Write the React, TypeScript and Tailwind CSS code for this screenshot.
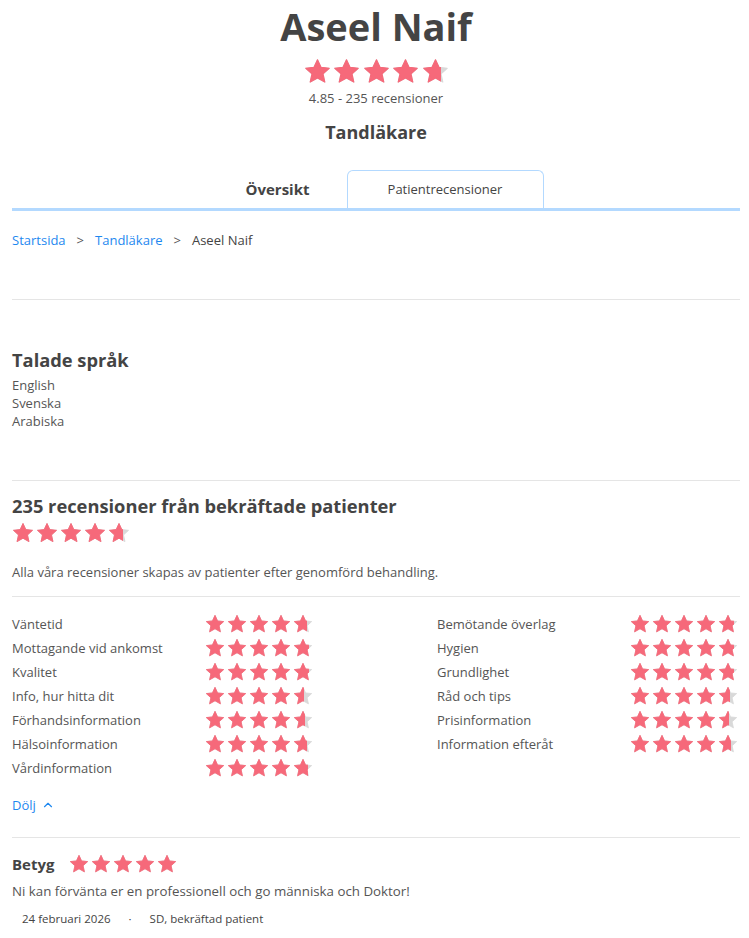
import React from 'react';
import { ChevronUp } from 'lucide-react';

const STAR = '12,1.6 15.1,8.3 22.4,9.1 16.9,14.1 18.5,21.4 12,17.7 5.5,21.4 7.1,14.1 1.6,9.1 8.9,8.3';

const Star: React.FC<{ size: number; fill: number }> = ({ size, fill }) => (
  <span className="relative inline-block shrink-0" style={{ width: size, height: size }}>
    <svg viewBox="0 0 24 24" width={size} height={size} className="block">
      <polygon points={STAR} fill="#d9d9d9" stroke="#d9d9d9" strokeWidth="1" strokeLinejoin="round" />
    </svg>
    <span className="absolute left-0 top-0 h-full overflow-hidden" style={{ width: size * fill }}>
      <svg viewBox="0 0 24 24" width={size} height={size} className="block">
        <polygon points={STAR} fill="#f6697a" stroke="#f6697a" strokeWidth="1" strokeLinejoin="round" />
      </svg>
    </span>
  </span>
);

const Stars: React.FC<{ size: number; last: number; gap: string }> = ({ size, last, gap }) => (
  <div className={`flex ${gap}`}>
    {[1, 1, 1, 1, last].map((f, i) => (
      <Star key={i} size={size} fill={f} />
    ))}
  </div>
);

// fill of the last star per row
const LEFT: [string, number][] = [
  ['Väntetid', 0.7],
  ['Mottagande vid ankomst', 0.8],
  ['Kvalitet', 0.78],
  ['Info, hur hitta dit', 0.55],
  ['Förhandsinformation', 0.58],
  ['Hälsoinformation', 0.68],
  ['Vårdinformation', 0.74],
];

const RIGHT: [string, number][] = [
  ['Bemötande överlag', 0.8],
  ['Hygien', 0.8],
  ['Grundlighet', 0.8],
  ['Råd och tips', 0.6],
  ['Prisinformation', 0.55],
  ['Information efteråt', 0.65],
];

const RatingRow: React.FC<{ label: string; fill: number }> = ({ label, fill }) => (
  <div className="flex h-[24px] items-center justify-between">
    <span className="text-[13px] leading-[24px] text-[#555]">{label}</span>
    <Stars size={20} last={fill} gap="gap-[2px]" />
  </div>
);

const Divider: React.FC<{ mt: string }> = ({ mt }) => <div className={`${mt} h-px bg-[#e5e5e5]`} />;

export default function App() {
  return (
    <div className="min-h-[938px] bg-white px-3 pr-[9px] font-['Open_Sans',sans-serif] text-[#444]">
      <header className="text-center">
        <h1 className="pt-[4px] text-[38px] font-bold leading-[44px] text-[#444]">Aseel Naif</h1>
        <div className="mt-[10px] flex justify-center">
          <Stars size={27} last={0.72} gap="gap-[2.5px]" />
        </div>
        <p className="mt-[4px] text-[13px] leading-[18px] text-[#555]">4.85 - 235 recensioner</p>
        <h2 className="mt-[13px] text-[18px] font-bold leading-[24px] text-[#444]">Tandläkare</h2>
      </header>

      <nav className="mt-[26px] flex justify-center border-b-[3px] border-[#b3d9ff]">
        <div className="flex h-[38px] w-[138px] items-center justify-center text-[15px] font-bold text-[#444]">
          Översikt
        </div>
        <div className="flex h-[38px] w-[197px] items-center justify-center rounded-t-[6px] border border-b-0 border-[#b3d9ff] text-[13px] text-[#444]">
          Patientrecensioner
        </div>
      </nav>

      <div className="mt-[20px] flex items-center text-[13px] leading-[18px]">
        <a className="text-[#1e88f0]">Startsida</a>
        <span className="mx-[11px] text-[#555]">&gt;</span>
        <a className="text-[#1e88f0]">Tandläkare</a>
        <span className="mx-[11px] text-[#555]">&gt;</span>
        <span className="text-[#444]">Aseel Naif</span>
      </div>

      <Divider mt="mt-[50px]" />

      <section>
        <h3 className="mt-[47px] text-[18.3px] font-bold leading-[26px] text-[#444]">Talade språk</h3>
        <ul className="mt-[3px] text-[13px] leading-[18px] text-[#555]">
          <li>English</li>
          <li>Svenska</li>
          <li>Arabiska</li>
        </ul>
      </section>

      <Divider mt="mt-[50px]" />

      <section>
        <h3 className="mt-[12px] text-[18.3px] font-bold leading-[26px] text-[#444]">
          235 recensioner från bekräftade patienter
        </h3>
        <div className="mt-[3px]">
          <Stars size={22} last={0.7} gap="gap-[2px]" />
        </div>
        <p className="mt-[19px] text-[13px] leading-[18px] text-[#555]">
          Alla våra recensioner skapas av patienter efter genomförd behandling.
        </p>
        <Divider mt="mt-[15px]" />

        <div className="mt-[15px] grid grid-cols-2 gap-x-[124px] pr-[2px]">
          <div>
            {LEFT.map(([l, f]) => (
              <RatingRow key={l} label={l} fill={f} />
            ))}
          </div>
          <div>
            {RIGHT.map(([l, f]) => (
              <RatingRow key={l} label={l} fill={f} />
            ))}
          </div>
        </div>

        <button className="mt-[16px] flex items-center gap-[5px] text-[13px] leading-[18px] text-[#1e88f0]">
          Dölj <ChevronUp size={14} strokeWidth={2} />
        </button>
      </section>

      <Divider mt="mt-[23px]" />

      <article>
        <div className="mt-[14px] flex h-[24px] items-center gap-[15px]">
          <span className="text-[15px] font-bold text-[#444]">Betyg</span>
          <Stars size={20} last={1} gap="gap-[2px]" />
        </div>
        <p className="mt-[5px] text-[13.3px] leading-[20px] text-[#555]">
          Ni kan förvänta er en professionell och go människa och Doktor!
        </p>
        <div className="mt-[9px] flex items-center gap-[18px] pl-[10px] text-[11.5px] leading-[18px] text-[#444]">
          <span>24 februari 2026</span>
          <span>·</span>
          <span>SD, bekräftad patient</span>
        </div>
      </article>
    </div>
  );
}
